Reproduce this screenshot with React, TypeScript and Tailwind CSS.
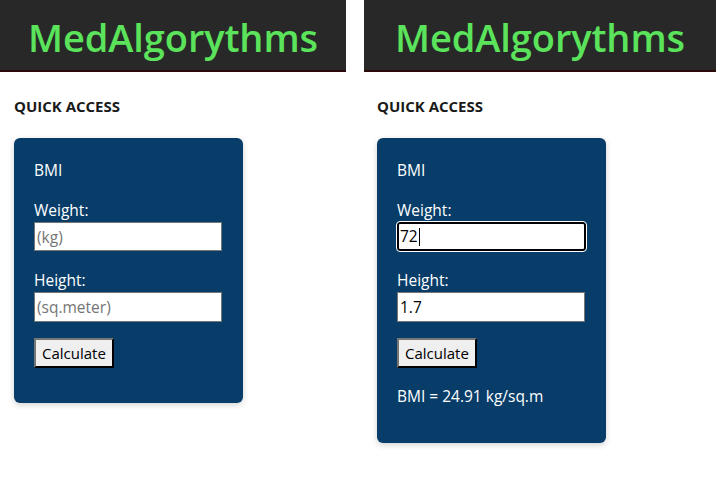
import React from "react";

const font = { fontFamily: '"Open Sans", "Noto Sans", sans-serif' };

function Header() {
  return (
    <div className="h-[72px] bg-[#282828] border-b-2 border-[#2a0a0a] flex justify-center pt-[10px]">
      <span className="text-[38px] leading-[54px] font-semibold text-[#5be35b] tracking-[-0.1px]">MedAlgorythms</span>
    </div>
  );
}

function Card({ filled }: { filled: boolean }) {
  return (
    <div className="w-[229px] rounded-[6px] bg-[#083d69] text-white shadow-[0_2px_6px_rgba(0,0,0,0.18)] pl-[20px] pt-[21px] flex flex-col">
      <div className="text-[15.5px] leading-[22px]">BMI</div>
      <div className="text-[15.5px] leading-[22px] mt-[18px]">Weight:</div>
      {filled ? (
        <div className="mt-[1px] h-[29px] w-[189px] bg-white rounded-[3px] border-2 border-black outline outline-1 outline-white flex items-center pl-[1px] text-[15.5px] text-black">
          <span>72</span>
          <span className="w-px h-[18px] bg-black ml-[1px]"></span>
        </div>
      ) : (
        <input
          readOnly
          placeholder="(kg)"
          className="mt-[1px] h-[29px] w-[188px] bg-white border border-[#767676] px-[2px] text-[15.5px] text-black placeholder:text-[#757575] outline-none"
        />
      )}
      <div className="text-[15.5px] leading-[22px] mt-[18px]">Height:</div>
      <input
        readOnly
        placeholder="(sq.meter)"
        defaultValue={filled ? "1.7" : ""}
        className="mt-[1px] h-[30px] w-[188px] bg-white border border-[#767676] px-[2px] text-[15.5px] text-black placeholder:text-[#757575] outline-none"
      />
      <div className="mt-[16px]">
        <button className="h-[30px] px-[6px] bg-[#efefef] text-black text-[15px] border-2 border-t-[#767676] border-l-[#767676] border-r-black border-b-black">
          Calculate
        </button>
      </div>
      {filled && <div className="text-[15.5px] leading-[22px] mt-[17px]">BMI = 24.91 kg/sq.m</div>}
      <div className={filled ? "h-[36px]" : "h-[35px]"}></div>
    </div>
  );
}

function Panel({ filled, padLeft }: { filled: boolean; padLeft: string }) {
  return (
    <div className="flex flex-col">
      <Header />
      <div className={padLeft}>
        <div className="mt-[24px] text-[15px] leading-[20px] font-bold text-[#1a1a1a]">QUICK ACCESS</div>
        <div className="mt-[22px]">
          <Card filled={filled} />
        </div>
      </div>
    </div>
  );
}

export default function App() {
  return (
    <div className="w-[716px] h-[485px] bg-white flex" style={font}>
      <div className="w-[346px]">
        <Panel filled={false} padLeft="pl-[14px]" />
      </div>
      <div className="w-[18px]"></div>
      <div className="flex-1">
        <Panel filled={true} padLeft="pl-[13px]" />
      </div>
    </div>
  );
}
